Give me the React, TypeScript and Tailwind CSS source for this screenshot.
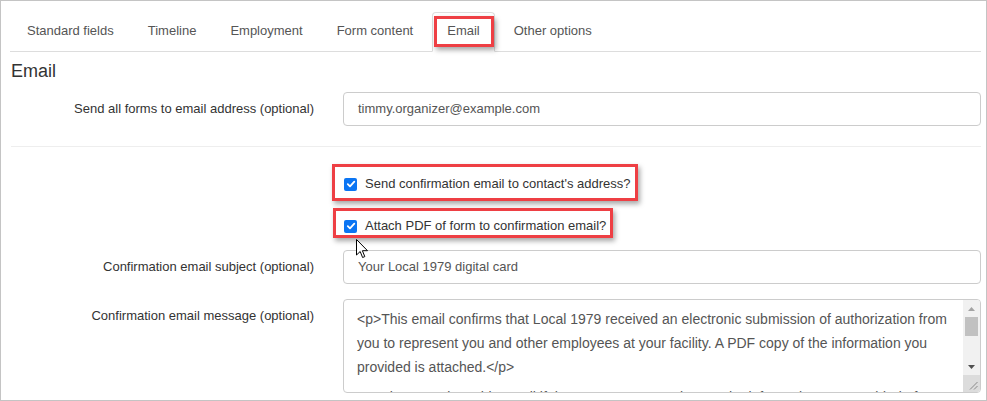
import React from "react";

const tabs = ["Standard fields", "Timeline", "Employment", "Form content", "Email", "Other options"];

function Check() {
  return (
    <span className="inline-flex h-[13px] w-[13px] shrink-0 items-center justify-center rounded-[2px] bg-[#0b75f3]">
      <svg width="10" height="10" viewBox="0 0 10 10">
        <path d="M1.8 5.2 L4 7.3 L8.3 2.6" fill="none" stroke="white" strokeWidth="1.8" strokeLinecap="round" strokeLinejoin="round" />
      </svg>
    </span>
  );
}

function RedBox({ className }: { className: string }) {
  return (
    <span
      className={
        "pointer-events-none absolute border-[3px] border-[#ee3f44] shadow-[2px_3px_5px_rgba(0,0,0,0.35)] " + className
      }
    />
  );
}

export default function App() {
  return (
    <div className="relative h-[401px] w-[987px] overflow-hidden border border-[#c4c4c4] bg-white font-['Liberation_Sans',Arial,sans-serif] text-[13px] text-[#333]">
      {/* Tabs */}
      <div className="ml-[9px] mr-[5px] mt-[11px] flex h-[40px] gap-[4px] border-b border-[#dddddd] pl-[2px]">
        {tabs.map((t) => {
          const active = t === "Email";
          return (
            <div
              key={t}
              className={
                "relative -mb-px h-[40px] rounded-t-[4px] border px-[14px] pt-[9px] leading-[18px] " +
                (active
                  ? "border-[#dddddd] border-b-white bg-white text-[#555]"
                  : "border-transparent text-[#555]")
              }
            >
              {t}
              {active && <RedBox className="left-[1px] top-[3px] h-[31px] w-[60px]" />}
            </div>
          );
        })}
      </div>

      <div className="pl-[10px] pr-[5px]">
        <h2 className="mt-[8px] text-[18px] leading-[22px] text-[#333]">Email</h2>

        {/* Row 1 */}
        <div className="mt-[10px] flex items-center">
          <div className="w-[303px] text-right">Send all forms to email address (optional)</div>
          <div className="ml-[29px] flex h-[34px] flex-1 items-center rounded-[4px] border border-[#cccccc] pl-[14px] text-[#555]">
            timmy.organizer@example.com
          </div>
        </div>

        <div className="mt-[20px] border-t border-[#eeeeee]" />

        {/* Checkbox 1 */}
        <div className="ml-[333px] mt-[27px] flex">
          <div className="relative flex items-center gap-[8px] leading-[20px]">
            <Check />
            <span>Send confirmation email to contact's address?</span>
            <RedBox className="-left-[12px] -right-[7px] -top-[10px] -bottom-[7px]" />
          </div>
        </div>

        {/* Checkbox 2 */}
        <div className="ml-[333px] mt-[22px] flex">
          <div className="relative flex items-center gap-[8px] leading-[20px]">
            <Check />
            <span>Attach PDF of form to confirmation email?</span>
            <RedBox className="-left-[11px] -right-[7px] -top-[8px] -bottom-[2px]" />
          </div>
        </div>

        {/* Subject */}
        <div className="mt-[14px] flex items-center">
          <div className="w-[303px] text-right">Confirmation email subject (optional)</div>
          <div className="ml-[29px] flex h-[34px] flex-1 items-center rounded-[4px] border border-[#cccccc] pl-[14px] text-[#555]">
            Your Local 1979 digital card
          </div>
        </div>

        {/* Message */}
        <div className="mt-[15px] flex items-start">
          <div className="w-[303px] pt-[7px] text-right leading-[20px]">Confirmation email message (optional)</div>
          <div className="relative ml-[29px] flex h-[94px] flex-1 overflow-hidden rounded-[4px] border border-[#cccccc] text-[14px] text-[#555]">
            <div className="flex-1 pl-[13px] pr-[6px] pt-[7px] leading-[24px]">
              <div>
                {"<p>This email confirms that Local 1979 received an electronic submission of authorization from you to represent you and other employees at your facility. A PDF copy of the information you provided is attached.</p>"}
              </div>
              <div className="mt-[6px] whitespace-pre">
                {"      Please reply to this email if there are any corrections to the information you provided. If you"}
              </div>
            </div>
            <div className="flex w-[17px] shrink-0 flex-col bg-[#f1f1f1]">
              <div className="flex h-[17px] items-center justify-center">
                <svg width="7" height="4" viewBox="0 0 7 4"><path d="M0 4 L3.5 0 L7 4 Z" fill="#a3a3a3" /></svg>
              </div>
              <div className="mx-[2px] h-[19px] bg-[#c1c1c1]" />
              <div className="flex-1" />
              <div className="flex h-[17px] items-center justify-center">
                <svg width="7" height="4" viewBox="0 0 7 4"><path d="M0 0 L3.5 4 L7 0 Z" fill="#505050" /></svg>
              </div>
              <div className="flex h-[17px] items-end justify-end bg-[#dcdcdc] pb-[2px] pr-[2px]">
                <svg width="9" height="9" viewBox="0 0 9 9">
                  <path d="M8.5 1 L1 8.5 M8.5 5 L5 8.5" stroke="#888" strokeWidth="1" />
                </svg>
              </div>
            </div>
          </div>
        </div>
      </div>

      {/* Mouse cursor */}
      <svg className="absolute left-[355px] top-[238px]" width="13" height="20" viewBox="0 0 13 20">
        <path d="M0.5 0.5 L0.5 16 L4.2 12.5 L6.6 18.5 L8.8 17.6 L6.4 11.7 L11.5 11.7 Z" fill="white" stroke="black" strokeWidth="1" strokeLinejoin="round" />
      </svg>
    </div>
  );
}
